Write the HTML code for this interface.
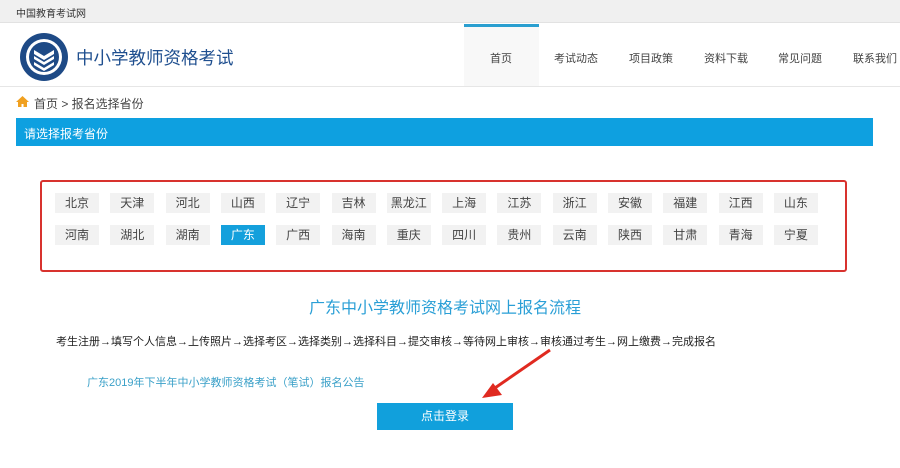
<!DOCTYPE html>
<html><head><meta charset="utf-8"><style>
*{margin:0;padding:0;box-sizing:border-box}
body{width:900px;height:468px;background:#fff;font-family:"Liberation Sans","Noto Sans CJK SC",sans-serif;position:relative;overflow:hidden;color:#333}
.a{position:absolute;white-space:nowrap}
.nav{position:absolute;top:50px;font-size:11px;color:#444;white-space:nowrap}
.p{position:absolute;width:44px;height:20px;background:#f2f2f2;font-size:12px;line-height:20px;text-align:center;color:#444}
</style></head><body>
<div class="a" style="left:0;top:0;width:900px;height:23px;background:#f0f0f0;border-bottom:1px solid #e2e2e2"></div>
<div class="a" style="left:16px;top:5px;font-size:10px;color:#333">中国教育考试网</div>
<svg class="a" style="left:19px;top:32px" width="50" height="50" viewBox="0 0 50 50">
<circle cx="25" cy="25" r="24" fill="#1e4a86"/><circle cx="25" cy="25" r="18" fill="#fff"/><circle cx="25" cy="25" r="15" fill="#1e4a86"/>
<path d="M15 18l10 6 10-6v4l-10 6-10-6z M15 24l10 6 10-6v3l-10 6-10-6z M15 30l10 6 10-6v3l-10 6-10-6z" fill="#fff"/>
</svg>
<div class="a" style="left:76px;top:45px;font-size:17.5px;color:#1f4f8f">中小学教师资格考试</div>
<div class="a" style="left:464px;top:24px;width:75px;height:62px;background:#f8f8f8"></div>
<div class="a" style="left:464px;top:24px;width:75px;height:3px;background:#2a9fd0"></div>
<div class="nav" style="left:490px">首页</div>
<div class="nav" style="left:554px">考试动态</div>
<div class="nav" style="left:629px">项目政策</div>
<div class="nav" style="left:704px">资料下载</div>
<div class="nav" style="left:778px">常见问题</div>
<div class="nav" style="left:853px">联系我们</div>
<div class="a" style="left:0;top:86px;width:900px;height:1px;background:#e6e6e6"></div>
<svg class="a" style="left:16px;top:96px" width="13" height="11" viewBox="0 0 13 11"><path d="M6.5 0L0 6h2v5h3.5V8h2v3H11V6h2z" fill="#f0a020"/></svg>
<div class="a" style="left:34px;top:95px;font-size:12px;color:#444">首页 &gt; 报名选择省份</div>
<div class="a" style="left:16px;top:118px;width:857px;height:28px;background:#0ea0e0"></div>
<div class="a" style="left:24px;top:125px;font-size:12px;color:#fff">请选择报考省份</div>
<div class="a" style="left:40px;top:180px;width:807px;height:92px;border:2px solid #d8322e;border-radius:3px"></div>
<div id="g"></div>
<div class="a" style="left:0;top:294px;width:890px;text-align:center;font-size:16px;color:#2a9fd6">广东中小学教师资格考试网上报名流程</div>
<div class="a" style="left:56px;top:333px;font-size:11px;color:#222">考生注册→填写个人信息→上传照片→选择考区→选择类别→选择科目→提交审核→等待网上审核→审核通过考生→网上缴费→完成报名</div>
<div class="a" style="left:87px;top:374px;font-size:11px;color:#3aa0c8">广东2019年下半年中小学教师资格考试（笔试）报名公告</div>
<div class="a" style="left:377px;top:403px;width:136px;height:27px;background:#11a0dc;color:#fff;font-size:12px;line-height:27px;text-align:center">点击登录</div>
<svg class="a" style="left:470px;top:345px" width="90" height="60" viewBox="0 0 90 60"><line x1="80" y1="5" x2="22" y2="45" stroke="#e02a20" stroke-width="3"/><path d="M12 53l20-3-9-12z" fill="#e02a20"/></svg>
<script>
var r1="北京 天津 河北 山西 辽宁 吉林 黑龙江 上海 江苏 浙江 安徽 福建 江西 山东".split(" "),r2="河南 湖北 湖南 广东 广西 海南 重庆 四川 贵州 云南 陕西 甘肃 青海 宁夏".split(" "),h="";
[r1,r2].forEach(function(r,j){r.forEach(function(t,i){var x=55+i*55.3,y=j?225:193,s=(j&&i==3)?"background:#14a0dc;color:#fff;":"";h+='<div class="p" style="'+s+'left:'+x+'px;top:'+y+'px">'+t+'</div>';});});
document.getElementById("g").innerHTML=h;
</script>
</body></html>
